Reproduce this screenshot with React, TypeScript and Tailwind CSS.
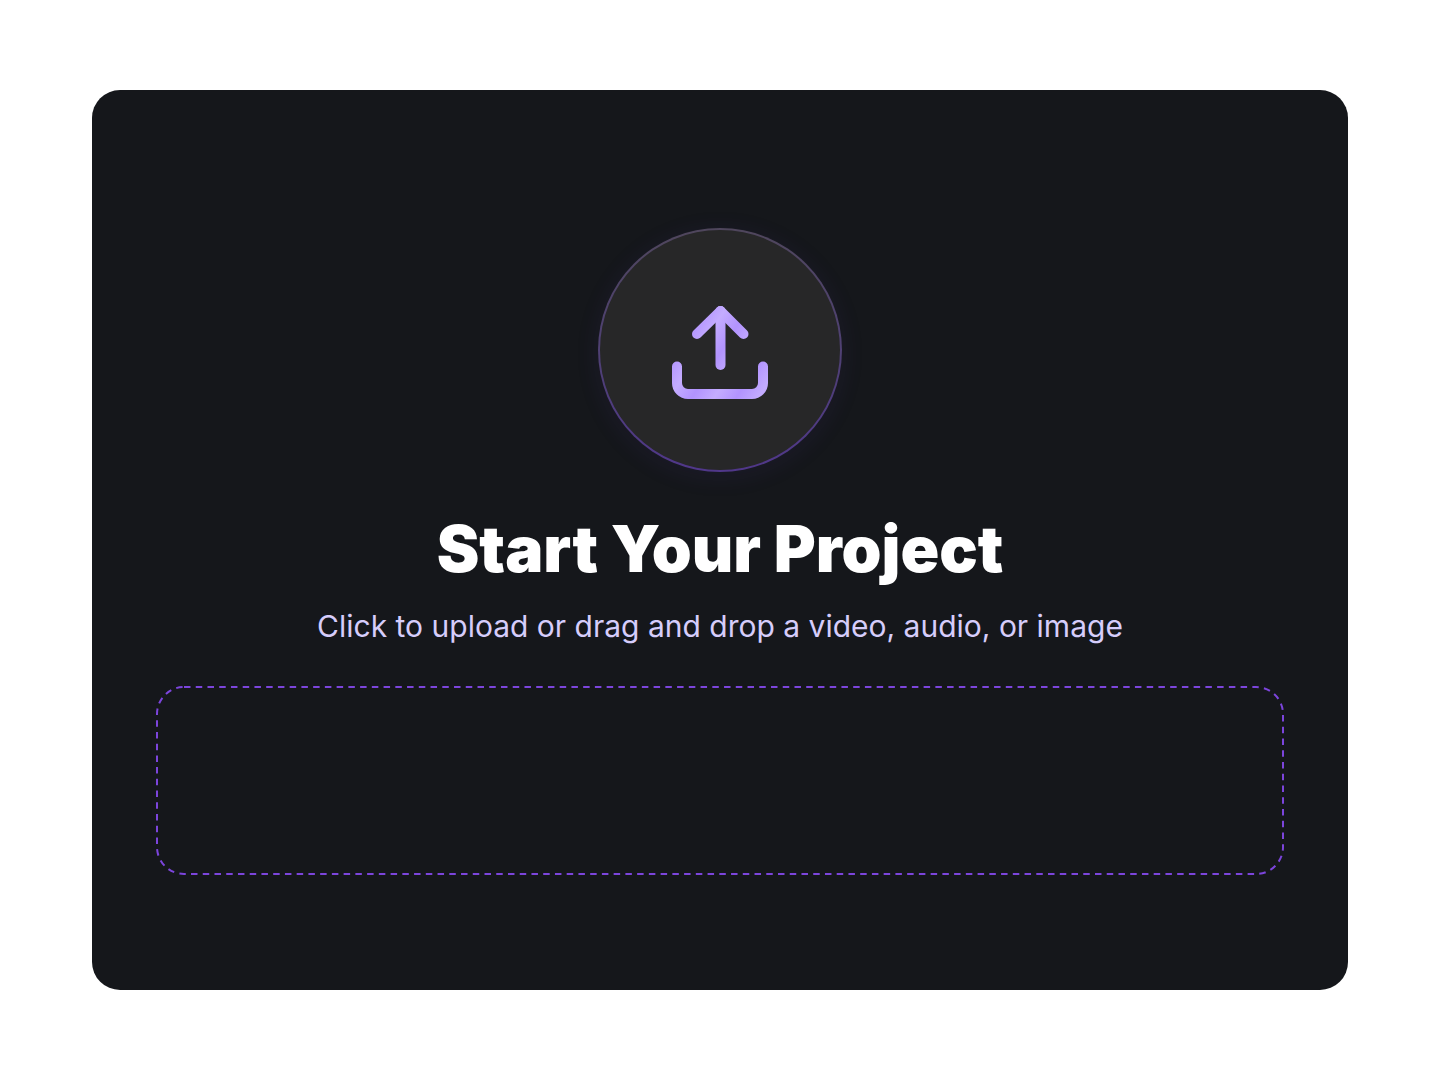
import React, { useRef } from 'react';

function UploadIcon() {
  return (
    <svg width="100" height="100" viewBox="0 0 100 100" fill="none" aria-hidden="true">
      <defs>
        <linearGradient id="upload-stroke" gradientUnits="userSpaceOnUse" x1="10" y1="10" x2="26" y2="20" spreadMethod="reflect">
          <stop offset="0" stopColor="#c4acff" />
          <stop offset="1" stopColor="#b293fe" />
        </linearGradient>
      </defs>
      <g stroke="url(#upload-stroke)" strokeWidth="10" strokeLinecap="round" strokeLinejoin="round">
        <path d="M27 34 50.5 11 73.5 34" />
        <path d="M50.5 11v54" />
        <path d="M7 66.5V83a11 11 0 0 0 11 11h64a11 11 0 0 0 11-11V66.5" />
      </g>
    </svg>
  );
}

function UploadBadge() {
  return (
    <div className="rounded-full bg-linear-to-b from-[#4f465c] to-[#50378a] p-0.5 shadow-[0_4px_24px_rgba(91,55,180,0.10)]">
      <div className="flex size-60 items-center justify-center rounded-full bg-[#272728]">
        <UploadIcon />
      </div>
    </div>
  );
}

interface DropZoneProps {
  onFiles: (files: FileList) => void;
}

function DropZone({ onFiles }: DropZoneProps) {
  const inputRef = useRef<HTMLInputElement>(null);

  const handleDrop = (e: React.DragEvent) => {
    e.preventDefault();
    if (e.dataTransfer.files.length > 0) onFiles(e.dataTransfer.files);
  };

  return (
    <>
      <button
        type="button"
        aria-labelledby="upload-hint"
        onClick={() => inputRef.current?.click()}
        onDragOver={(e) => e.preventDefault()}
        onDrop={handleDrop}
        className="relative h-[189px] w-full cursor-pointer rounded-[28px]"
      >
        <span className="absolute inset-px">
          <svg className="size-full overflow-visible" aria-hidden="true">
            <rect width="100%" height="100%" rx="27" fill="none" stroke="#7c45dc" strokeWidth="2" strokeDasharray="6.5 5.24" />
          </svg>
        </span>
      </button>
      <input
        ref={inputRef}
        type="file"
        aria-labelledby="upload-hint"
        accept="video/*,audio/*,image/*"
        className="hidden"
        onChange={(e) => e.target.files && onFiles(e.target.files)}
      />
    </>
  );
}

export default function App() {
  const handleFiles = (files: FileList) => {
    console.log('Selected files:', Array.from(files).map((f) => f.name));
  };

  return (
    <main className="flex min-h-screen flex-col bg-white px-[92px] py-[90px] font-['Inter',sans-serif]">
      <section className="flex grow flex-col items-center rounded-[28px] bg-[#15171b] px-16 pt-[138px] pb-[115px] text-center">
        <UploadBadge />
        <h1 className="mt-[37px] text-[64px] leading-20 font-black text-white">Start Your Project</h1>
        <p id="upload-hint" className="mt-[17px] mb-10 text-3xl leading-10 text-[#d6cdfb]">
          Click to upload or drag and drop a video, audio, or image
        </p>
        <DropZone onFiles={handleFiles} />
      </section>
    </main>
  );
}
